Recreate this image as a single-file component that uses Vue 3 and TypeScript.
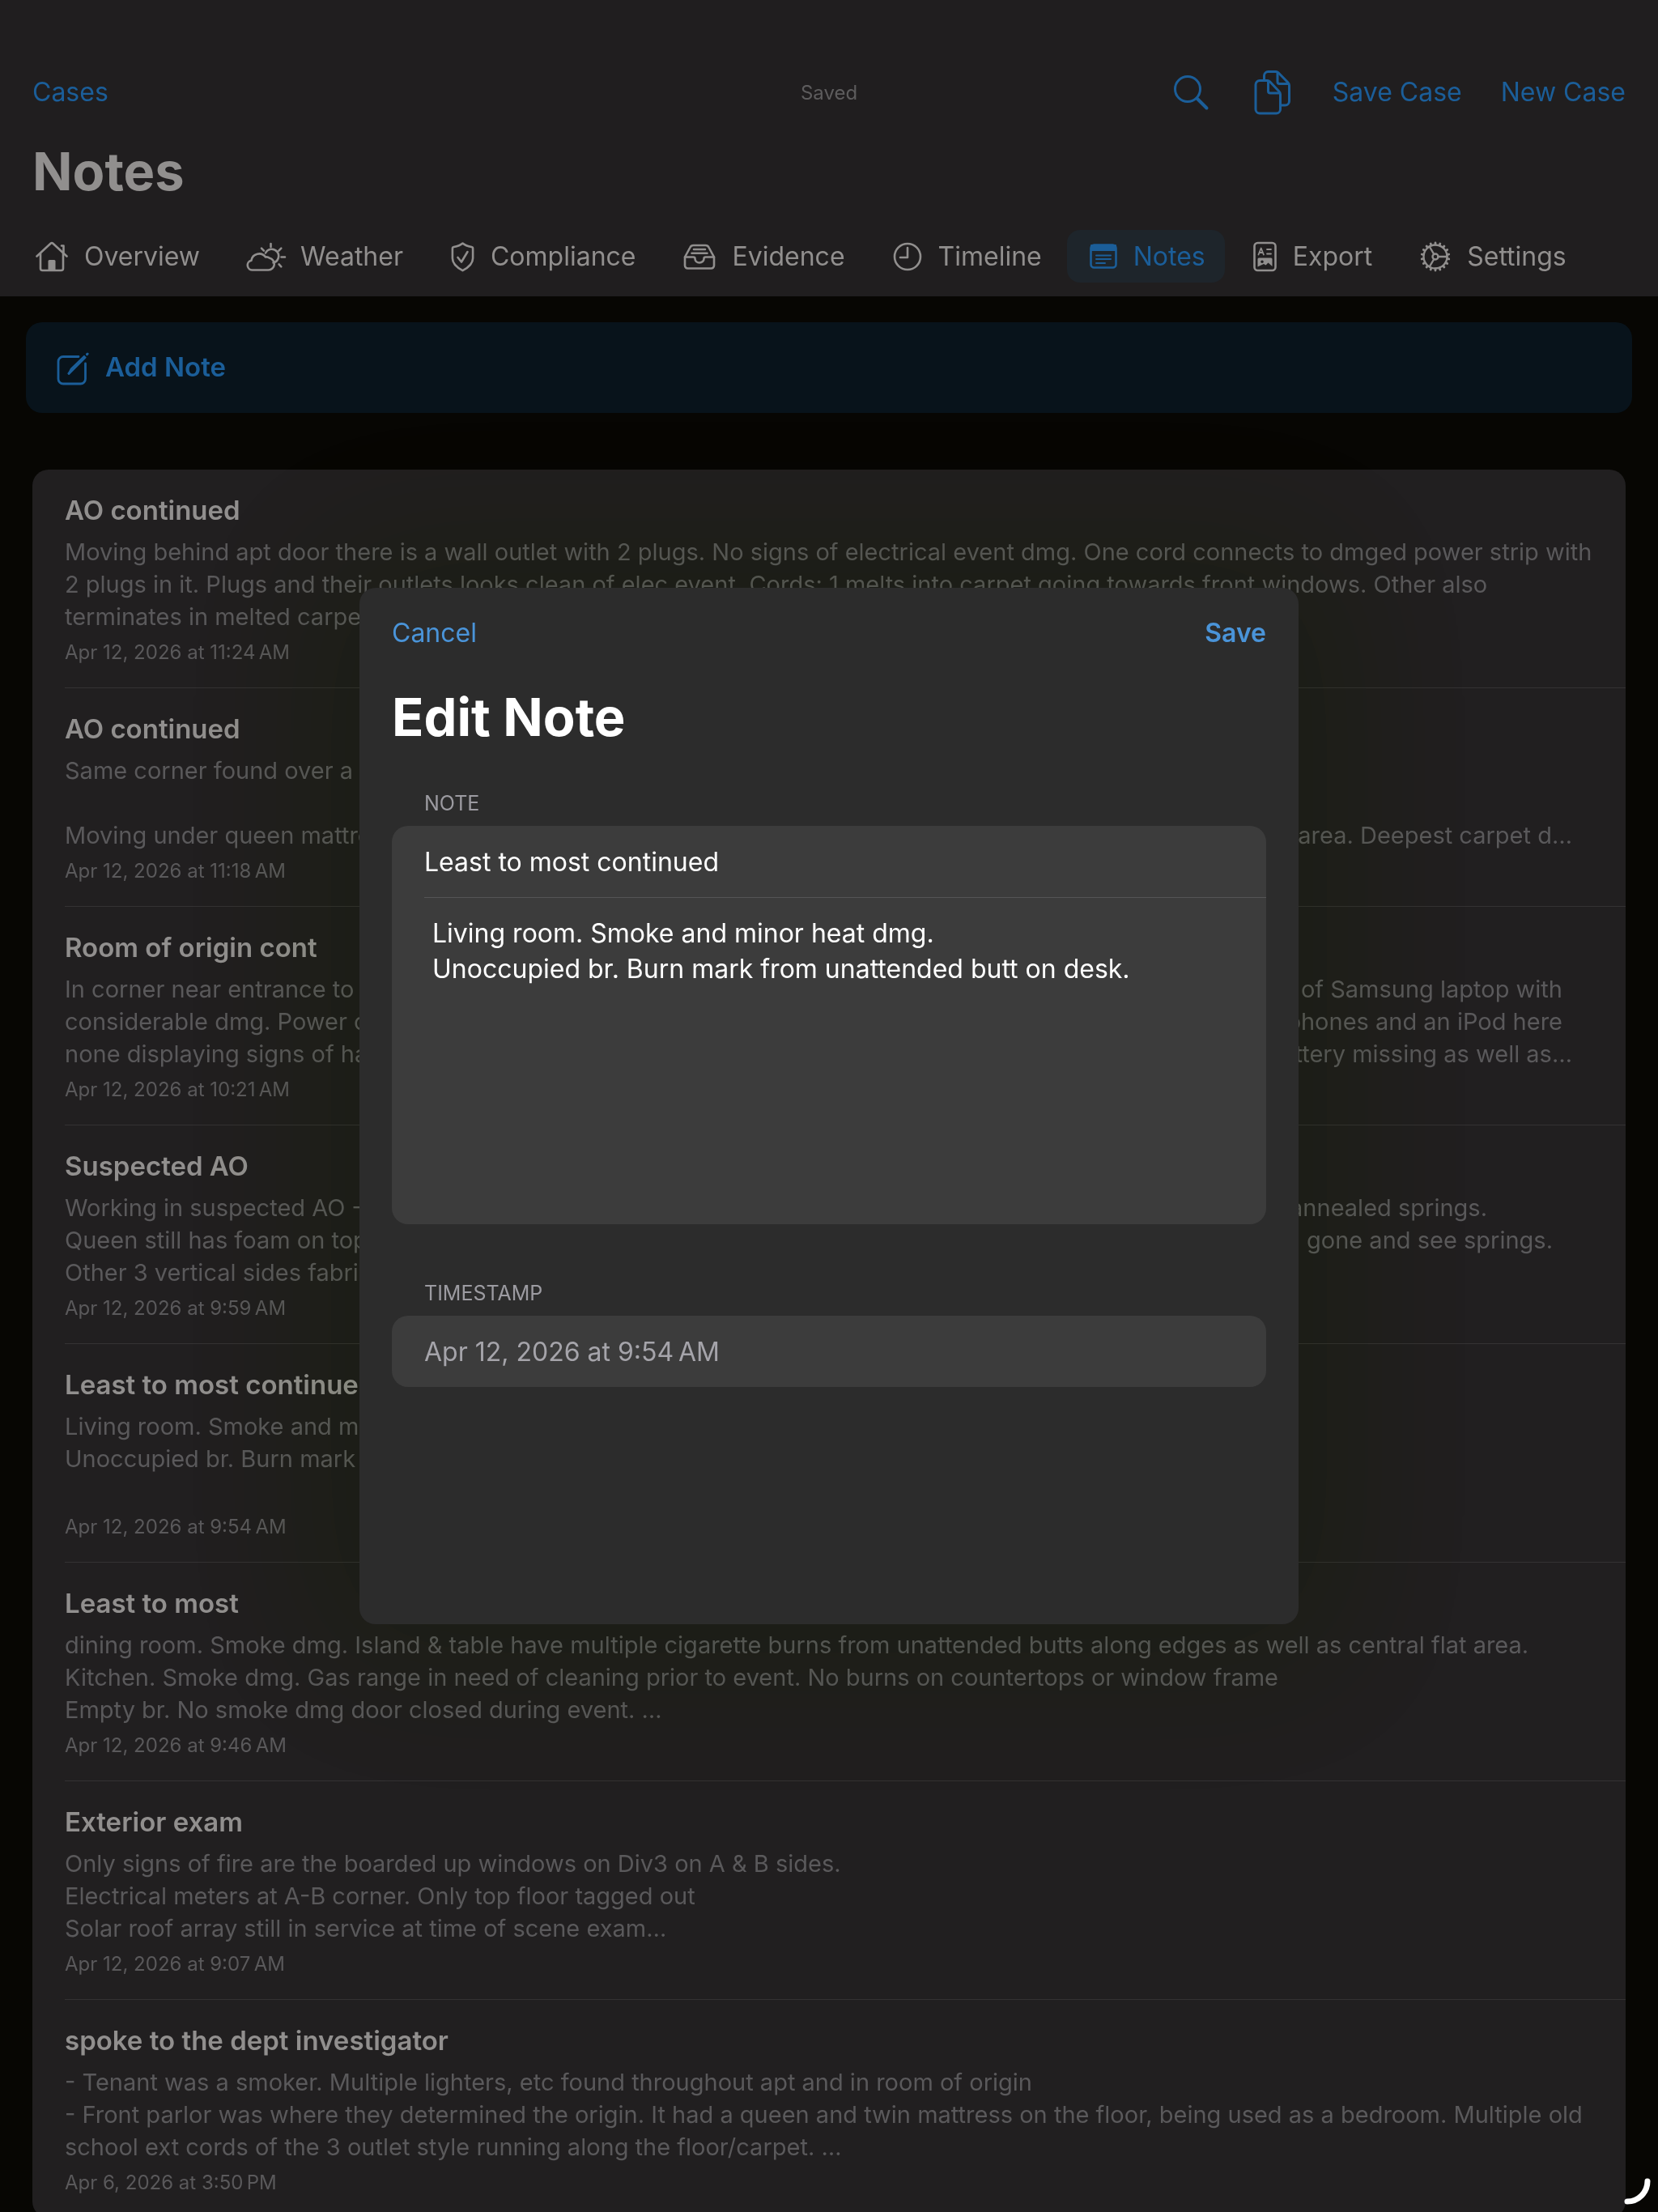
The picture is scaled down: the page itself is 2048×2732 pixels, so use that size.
<script setup lang="ts">
import { ref } from 'vue'

interface Tab {
  id: string
  label: string
}

interface Line {
  text: string
  tail?: string
  inset?: number
}

interface Note {
  title: string
  lines: Line[]
  date: string
}

const tabs: Tab[] = [
  { id: 'overview', label: 'Overview' },
  { id: 'weather', label: 'Weather' },
  { id: 'compliance', label: 'Compliance' },
  { id: 'evidence', label: 'Evidence' },
  { id: 'timeline', label: 'Timeline' },
  { id: 'notes', label: 'Notes' },
  { id: 'export', label: 'Export' },
  { id: 'settings', label: 'Settings' },
]
const activeTab = ref('notes')

const notes: Note[] = [
  {
    title: 'AO continued',
    lines: [
      { text: 'Moving behind apt door there is a wall outlet with 2 plugs. No signs of electrical event dmg. One cord connects to dmged power strip with' },
      { text: '2 plugs in it. Plugs and their outlets looks clean of elec event. Cords: 1 melts into carpet going towards front windows. Other also' },
      { text: 'terminates in melted carpet' },
    ],
    date: 'Apr 12, 2026 at 11:24\u202fAM',
  },
  {
    title: 'AO continued',
    lines: [
      { text: 'Same corner found over a d' },
      { text: '' },
      { text: 'Moving under queen mattress', tail: 'area. Deepest carpet d…', inset: 26 },
    ],
    date: 'Apr 12, 2026 at 11:18\u202fAM',
  },
  {
    title: 'Room of origin cont',
    lines: [
      { text: 'In corner near entrance to', tail: 'of Samsung laptop with', inset: 38 },
      { text: 'considerable dmg. Power cord', tail: 'phones and an iPod here', inset: 38 },
      { text: 'none displaying signs of having', tail: 'battery missing as well as…', inset: 26 },
    ],
    date: 'Apr 12, 2026 at 10:21\u202fAM',
  },
  {
    title: 'Suspected AO',
    lines: [
      { text: 'Working in suspected AO -', tail: 'annealed springs.', inset: 131 },
      { text: 'Queen still has foam on top', tail: 'foam gone and see springs.', inset: 50 },
      { text: 'Other 3 vertical sides fabric' },
    ],
    date: 'Apr 12, 2026 at 9:59\u202fAM',
  },
  {
    title: 'Least to most continued',
    lines: [
      { text: 'Living room. Smoke and minor' },
      { text: 'Unoccupied br. Burn mark' },
      { text: '' },
    ],
    date: 'Apr 12, 2026 at 9:54\u202fAM',
  },
  {
    title: 'Least to most',
    lines: [
      { text: 'dining room. Smoke dmg. Island & table have multiple cigarette burns from unattended butts along edges as well as central flat area.' },
      { text: 'Kitchen. Smoke dmg. Gas range in need of cleaning prior to event. No burns on countertops or window frame' },
      { text: 'Empty br. No smoke dmg door closed during event. …' },
    ],
    date: 'Apr 12, 2026 at 9:46\u202fAM',
  },
  {
    title: 'Exterior exam',
    lines: [
      { text: 'Only signs of fire are the boarded up windows on Div3 on A & B sides.' },
      { text: 'Electrical meters at A-B corner. Only top floor tagged out' },
      { text: 'Solar roof array still in service at time of scene exam…' },
    ],
    date: 'Apr 12, 2026 at 9:07\u202fAM',
  },
  {
    title: 'spoke to the dept investigator',
    lines: [
      { text: '- Tenant was a smoker. Multiple lighters, etc found throughout apt and in room of origin' },
      { text: '- Front parlor was where they determined the origin. It had a queen and twin mattress on the floor, being used as a bedroom. Multiple old' },
      { text: 'school ext cords of the 3 outlet style running along the floor/carpet. …' },
    ],
    date: 'Apr 6, 2026 at 3:50\u202fPM',
  },
]

const noteTitle = ref('Least to most continued')
const noteBody = ref('Living room. Smoke and minor heat dmg.\nUnoccupied br. Burn mark from unattended butt on desk.')
const timestamp = 'Apr 12, 2026 at 9:54\u202fAM'

const gearTeeth = Array.from({ length: 18 }, (_, i) => i * 20)
</script>

<template>
  <div class="screen">
    <header class="header">
      <div class="toolbar">
        <a class="action" href="#">Cases</a>
        <span class="status">Saved</span>
        <div class="toolbar-end">
          <button class="action icon-action" type="button" aria-label="Search">
            <svg width="52" height="56" viewBox="0 0 52 56" fill="none" stroke="currentColor" stroke-linecap="round">
              <circle cx="22" cy="24" r="15.5" stroke-width="3" />
              <path d="M33.500 35.500 45.500 47.500" stroke-width="4" />
            </svg>
          </button>
          <button class="action icon-action" type="button" aria-label="Duplicate">
            <svg width="53" height="56" viewBox="0 0 53 56" fill="none" stroke="currentColor" stroke-width="3" stroke-linejoin="round">
              <path d="M16.500 13V7.500a5 5 0 0 1 5-5h9.500a4 4 0 0 1 3 1.200L46 16a5 5 0 0 1 1.500 3.500V39a5 5 0 0 1-5 5H38" />
              <path d="M33 3v12a2.500 2.500 0 0 0 2.500 2.500H47" />
              <path d="M11 13.500h9.500a4 4 0 0 1 3 1.200L35 27a5 5 0 0 1 1.500 3.500V49a5 5 0 0 1-5 5H11a5 5 0 0 1-5-5V18.500a5 5 0 0 1 5-5Z" />
              <path d="M21.500 14v12.500a2.500 2.500 0 0 0 2.500 2.500h12" />
            </svg>
          </button>
          <button class="action" type="button">Save Case</button>
          <button class="action" type="button">New Case</button>
        </div>
      </div>
      <h1 class="title">Notes</h1>
      <nav class="tabs">
        <button
          v-for="tab in tabs"
          :key="tab.id"
          type="button"
          class="tab"
          :class="{ active: tab.id === activeTab }"
          @click="activeTab = tab.id"
        >
          <svg v-if="tab.id === 'overview'" width="40" height="38" viewBox="0 0 40 38" fill="none" stroke="currentColor" stroke-width="2.600" stroke-linecap="round" stroke-linejoin="round">
            <path d="M1.500 18.500 18.500 2.700a2.200 2.200 0 0 1 3 0L38.500 18.500" />
            <path d="M6 15v18.500a2.500 2.500 0 0 0 2.500 2.500h23a2.500 2.500 0 0 0 2.500-2.500V15M32 5.500h2.500v8" />
            <path d="M15.500 36V24.500a1.500 1.500 0 0 1 1.500-1.500h6a1.500 1.500 0 0 1 1.500 1.500V36Z" fill="currentColor" stroke="none" />
          </svg>
          <svg v-else-if="tab.id === 'weather'" width="45" height="38" viewBox="3 0 45 38" overflow="visible" fill="none" stroke="currentColor" stroke-width="2.600" stroke-linecap="round" stroke-linejoin="round">
            <path d="M9.500 35.500h19a7.500 7.500 0 0 0 1.500-14.800 6.500 6.500 0 0 0-5-1.200 9.800 9.800 0 0 0-17.600 4.200A6 6 0 0 0 9.500 35.500Z" />
            <path d="M25 14.500a8.500 8.500 0 1 1 9.500 12M31.500 3v4M44.300 8.700l-2.900 2.900M49 19.500h-4.500M44.300 31.300l-2.700-2.900M20 8.700l2.900 2.900" />
          </svg>
          <svg v-else-if="tab.id === 'compliance'" width="29" height="38" viewBox="0 0 29 38" fill="none" stroke="currentColor" stroke-width="2.600" stroke-linecap="round" stroke-linejoin="round">
            <path d="M14.500 2.500c3 2.600 7 3.800 11 4.600a2 2 0 0 1 1.600 2V21c0 7.500-6.600 12-12.600 15.200C8.500 33 1.900 28.500 1.900 21V9.100a2 2 0 0 1 1.600-2c4-.8 8-2 11-4.600Z" />
            <path d="m8.500 20 4.500 5.500 7.500-12.500" />
          </svg>
          <svg v-else-if="tab.id === 'evidence'" width="40" height="38" viewBox="0 0 40 38" fill="none" stroke="currentColor" stroke-width="2.600" stroke-linecap="round" stroke-linejoin="round">
            <path d="M2 19.500 8.500 7.500A4.500 4.500 0 0 1 12.500 5h15a4.500 4.500 0 0 1 4 2.500L38 19.500V30a3.500 3.500 0 0 1-3.500 3.500h-29A3.500 3.500 0 0 1 2 30Z" />
            <path d="M2 19.500h10.500a2 2 0 0 1 2 2 5.500 5 0 0 0 11 0 2 2 0 0 1 2-2H38M13 10h14M10.500 14.700h19" />
          </svg>
          <svg v-else-if="tab.id === 'timeline'" width="36" height="38" viewBox="0 0 36 38" fill="none" stroke="currentColor" stroke-width="2.600" stroke-linecap="round" stroke-linejoin="round">
            <circle cx="18" cy="19" r="16" />
            <path d="M18 8v12H9" />
          </svg>
          <svg v-else-if="tab.id === 'notes'" width="34" height="38" viewBox="0 0 34 38" fill="none" stroke="currentColor" stroke-width="2.600" stroke-linecap="round" stroke-linejoin="round">
            <rect x="1.500" y="4.500" width="31" height="28" rx="4" />
            <path d="M2 5h30v6H2Z" fill="currentColor" stroke-width="2" />
            <path d="M8 17.500h18M8 22h18M8 27h11" stroke-width="2" />
          </svg>
          <svg v-else-if="tab.id === 'export'" width="29" height="38" viewBox="0 0 29 38" fill="none" stroke="currentColor" stroke-width="2.600" stroke-linecap="round" stroke-linejoin="round">
            <rect x="1.500" y="2" width="26" height="34" rx="4" />
            <path d="m6.500 16.500 3.200-8 3.200 8M7.600 14h4.200M17 10h5M17 15.500h5" stroke-width="1.800" />
            <path fill-rule="evenodd" fill="currentColor" stroke="none" d="M7 20.500h15a1.500 1.500 0 0 1 1.500 1.500v9l-5-4.500-3 3-2.500-1.500-7.500 3.500V22A1.500 1.500 0 0 1 7 20.500Zm4 3a1.800 1.800 0 1 0 0 3.600 1.800 1.800 0 0 0 0-3.600Z" />
          </svg>
          <svg v-else width="38" height="38" viewBox="0 0 38 38" fill="none" stroke="currentColor" stroke-width="2.400" stroke-linecap="round">
            <circle cx="19" cy="19" r="14.500" />
            <circle cx="19" cy="19" r="3.500" />
            <path d="M22.500 19h11M17.300 16 11.700 6.500M17.300 22l-5.600 9.500" />
            <path v-for="a in gearTeeth" :key="a" d="M19 2v2" stroke-width="2.800" :transform="`rotate(${a} 19 19)`" />
          </svg>
          <span>{{ tab.label }}</span>
        </button>
      </nav>
    </header>

    <main class="content">
      <button class="add-note" type="button">
        <svg width="40" height="48" viewBox="0 -6 40 48" fill="none" stroke="currentColor" stroke-width="2.800" stroke-linecap="round" stroke-linejoin="round">
          <path d="M27 5.500H8a6 6 0 0 0-6 6V33a6 6 0 0 0 6 6h21.500a6 6 0 0 0 6-6V14" />
          <path d="M15 26.300 18 20.500 34 5" stroke-width="2.400" />
          <path d="M15 26.300 19 22.500 35 6.500M37.500 2.600l.6-.6" stroke-width="3" />
        </svg>
        <span>Add Note</span>
      </button>

      <ul class="notes">
        <li v-for="(note, i) in notes" :key="i" class="note">
          <div class="note-inner">
            <h2 class="note-title">{{ note.title }}</h2>
            <div class="note-body">
              <p v-for="(line, j) in note.lines" :key="j" class="line">
                <span>{{ line.text }}</span>
                <span v-if="line.tail" :style="{ marginRight: `${line.inset}px` }">{{ line.tail }}</span>
              </p>
            </div>
            <p class="note-date">{{ note.date }}</p>
          </div>
        </li>
      </ul>
    </main>

    <div class="overlay tint" aria-hidden="true">
      <div class="halo"></div>
    </div>

    <div class="overlay">
      <form class="dialog" role="dialog" aria-labelledby="dialog-title" @submit.prevent>
        <div class="dialog-bar">
          <button class="dialog-action" type="button">Cancel</button>
          <button class="dialog-action strong" type="submit">Save</button>
        </div>
        <h2 id="dialog-title" class="dialog-title">Edit Note</h2>

        <label class="group-label" for="note-title">NOTE</label>
        <div class="group">
          <input id="note-title" v-model="noteTitle" class="field" type="text" />
          <textarea v-model="noteBody" class="field editor" aria-label="Note text"></textarea>
        </div>

        <label class="group-label spaced" for="note-time">TIMESTAMP</label>
        <div class="group">
          <input id="note-time" class="field muted" type="text" :value="timestamp" readonly />
        </div>
      </form>
    </div>

    <svg class="corner-mark" width="34" height="34" viewBox="0 0 34 34" fill="none" stroke="#fff" stroke-width="7" stroke-linecap="round" aria-hidden="true">
      <path d="M29 4A25 25 0 0 1 4 29" />
    </svg>
  </div>
</template>

<style>
html,
body {
  margin: 0;
  background: #070603;
}
</style>

<style scoped>
.screen {
  position: relative;
  height: 100vh;
  overflow: hidden;
  background: #070603;
  color: #918f8e;
  font-family: Inter, "Liberation Sans", sans-serif;
  font-size: 32px;
  line-height: 44px;
}

button,
input,
textarea {
  margin: 0;
  padding: 0;
  border: 0;
  background: none;
  color: inherit;
  font: inherit;
}

h1,
h2,
p,
ul {
  margin: 0;
  padding: 0;
}

svg {
  display: block;
  flex: none;
}

.header {
  padding-top: 74px;
  background: #201e1f;
}

.toolbar {
  display: grid;
  grid-template-columns: 1fr auto 1fr;
  align-items: center;
  height: 80px;
  padding: 0 40px;
}

.toolbar-end {
  display: flex;
  align-items: center;
  justify-content: flex-end;
  gap: 48px;
}

.action {
  color: #1b5e99;
  text-decoration: none;
  white-space: nowrap;
}

.status {
  padding-top: 2px;
  color: #5d5c5d;
  font-size: 24px;
  line-height: 32px;
}

.title {
  padding: 16px 40px 0;
  font-size: 65px;
  line-height: 84px;
  font-weight: 700;
}

.tabs {
  display: flex;
  gap: 7px;
  padding: 30px 16px 17px;
}

.tab {
  display: flex;
  align-items: center;
  gap: 20px;
  height: 65px;
  padding: 0 24px 0 28px;
  border-radius: 16px;
  white-space: nowrap;
}

.tab.active {
  background: #1e252b;
  color: #1b5e99;
}

.add-note {
  display: flex;
  align-items: center;
  gap: 20px;
  width: calc(100% - 64px);
  height: 112px;
  margin: 32px 32px 70px;
  padding: 0 38px 2px;
  border-radius: 20px;
  background: #08131b;
  color: #1b5e99;
  font-size: 33px;
  font-weight: 600;
}

.notes {
  margin: 0 40px;
  padding-left: 40px;
  border-radius: 20px;
  background: #211f20;
  list-style: none;
}

.note + .note {
  border-top: 1px solid #343233;
}

.note-inner {
  padding: 28px 40px 27px 0;
}

.note-title {
  font-size: 33px;
  line-height: 44px;
  font-weight: 600;
}

.note-body {
  padding: 10px 0 8px;
}

.line {
  display: flex;
  justify-content: space-between;
  height: 40px;
  color: #5a595b;
  font-size: 29px;
  line-height: 40px;
  white-space: nowrap;
}

.note-date {
  color: #5a595b;
  font-size: 24px;
  line-height: 32px;
}

.overlay {
  position: absolute;
  inset: 0;
  display: flex;
  align-items: center;
  justify-content: center;
}

.tint {
  mix-blend-mode: difference;
  pointer-events: none;
}

.halo,
.dialog {
  box-sizing: border-box;
  width: 1160px;
  max-width: calc(100% - 80px);
  min-height: 1280px;
  border-radius: 20px;
}

.halo {
  box-shadow: 0 0 200px 60px rgb(5, 1, 12);
}

.dialog {
  padding: 0 40px 40px;
  background: #2c2c2c;
  box-shadow: 0 0 200px 60px rgba(0, 0, 0, 0.06);
  color: #fff;
}

.dialog-bar {
  display: flex;
  align-items: center;
  justify-content: space-between;
  height: 112px;
}

.dialog-action {
  color: #4a94d9;
}

.dialog-action.strong {
  font-weight: 600;
}

.dialog-title {
  font-size: 65px;
  line-height: 84px;
  font-weight: 700;
  padding: 6px 0 48px;
}

.group-label {
  display: block;
  padding: 0 40px 12px;
  color: #9c9ba1;
  font-size: 25px;
  line-height: 32px;
}

.group-label.spaced {
  padding-top: 69px;
}

.group {
  overflow: hidden;
  border-radius: 20px;
  background: #3c3c3c;
}

.field {
  display: block;
  box-sizing: border-box;
  width: 100%;
  height: 88px;
  padding: 0 40px;
  outline: none;
  line-height: 44px;
}

.field.editor {
  width: calc(100% - 40px);
  height: 404px;
  margin-left: 40px;
  padding: 22px 10px;
  border-top: 1px solid #555556;
  resize: none;
}

.field.muted {
  color: #a5a4aa;
}

.corner-mark {
  position: absolute;
  right: 8px;
  bottom: 8px;
}
</style>
